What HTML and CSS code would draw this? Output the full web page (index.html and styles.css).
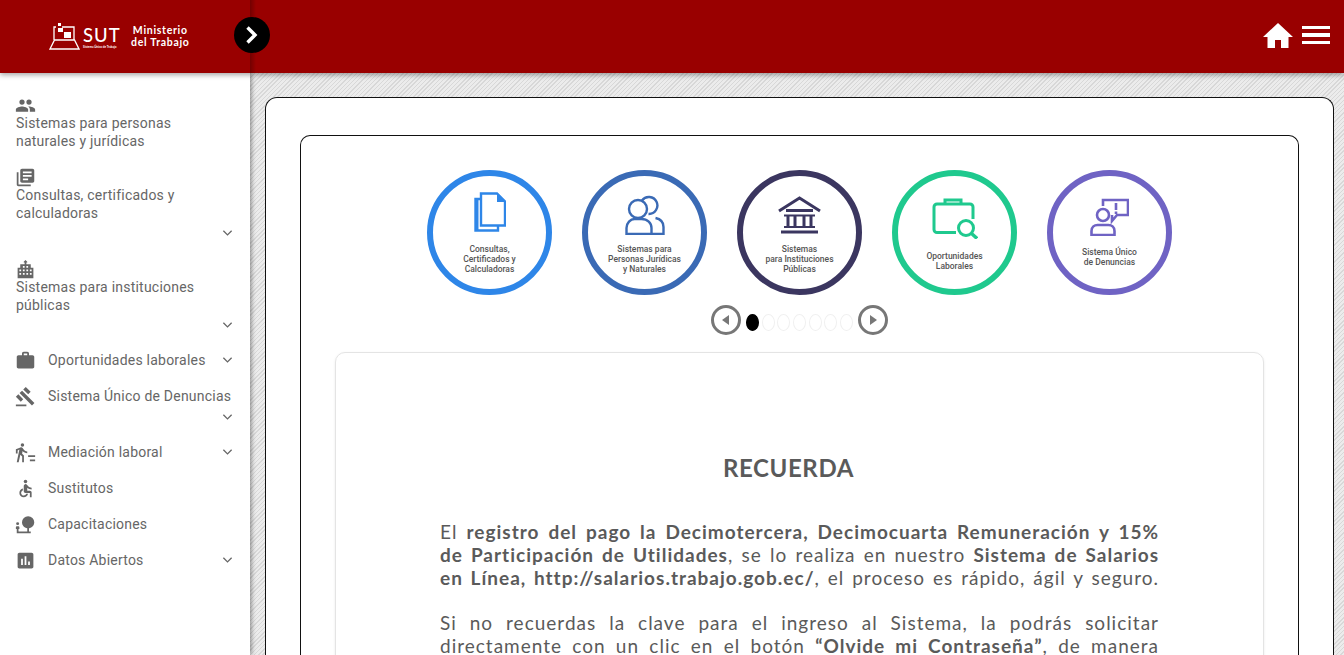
FILE: index.html
```html
<!DOCTYPE html>
<html lang="es">
<head>
  <meta charset="UTF-8" />
  <meta name="viewport" content="width=device-width, initial-scale=1" />
  <title>SUT - Ministerio del Trabajo</title>
  <link rel="stylesheet" href="styles.css">
</head>
<body>

  <!-- Header -->
  <header class="topbar">
    <div class="brand">
      <svg class="brand-mark" width="31" height="28" viewBox="0 0 31 28">
        <path d="M5 18V5h2M13 5h12v13M1 27l4.500-9h20l4.500 9z" fill="none" stroke="#fff" stroke-width="1.300"/>
        <rect x="9" y="1" width="3" height="3" fill="#fff"/>
        <rect x="9" y="6" width="5" height="4" fill="#fff"/>
        <rect x="15" y="10" width="7" height="6" fill="#fff"/>
      </svg>
      <div class="brand-sut">
        <span class="sut-name">SUT</span>
        <span class="sut-sub">Sistema Único de Trabajo</span>
      </div>
      <div class="brand-min">Ministerio<br>del Trabajo</div>
    </div>
    <button class="toggle-btn">
      <svg width="16" height="20" viewBox="0 0 16 20"><path d="M3.500 2.500l7.500 7.500-7.500 7.500" fill="none" stroke="#fff" stroke-width="3.400"/></svg>
    </button>
    <div class="top-actions">
      <svg width="30" height="27" viewBox="0 0 30 27"><path d="M15 1L0 15h4.500v11h7.500v-8h6v8h7.500V15H30z" fill="#fff"/></svg>
      <div class="burger"><span></span><span></span><span></span></div>
    </div>
  </header>

  <div class="layout">
    <!-- Sidebar -->
    <nav class="sidebar">
      <div class="stack-item">
        <svg class="icon" viewBox="0 0 24 24"><path d="M16 11a3 3 0 1 0 0-6 3 3 0 0 0 0 6zm-8 0a3 3 0 1 0 0-6 3 3 0 0 0 0 6zm0 2c-2.300 0-7 1.200-7 3.500V19h14v-2.500C15 14.200 10.300 13 8 13zm8 0c-.3 0-.6 0-1 .1 1.200.8 2 1.900 2 3.400V19h6v-2.500c0-2.300-4.700-3.500-7-3.500z"/></svg>
        <span class="stack-label">Sistemas para personas naturales y jurídicas</span>
      </div>
      <div class="stack-item stack-mid">
        <svg class="icon" viewBox="0 0 24 24"><path d="M4 6H2v14c0 1.100.9 2 2 2h14v-2H4V6zm16-4H8c-1.100 0-2 .9-2 2v12c0 1.100.9 2 2 2h12c1.100 0 2-.9 2-2V4c0-1.100-.9-2-2-2zm-1 9H9V9h10v2zm-4 4H9v-2h6v2zm4-8H9V5h10v2z"/></svg>
        <span class="stack-label">Consultas, certificados y calculadoras</span>
        <svg class="chev chev-end" viewBox="0 0 12 8"><path d="M1.500 1.500L6 6l4.500-4.500"/></svg>
      </div>
      <div class="stack-item stack-low">
        <svg class="icon" viewBox="0 0 24 24"><path d="M12 1l2 2v1h-1v2h5v4h3v12H3V10h3V6h5V4h-1V3zM7 12H5v2h2zm0 4H5v2h2zm4-8H9v2h2zm0 4H9v2h2zm0 4H9v2h2zm4-8h-2v2h2zm0 4h-2v2h2zm0 4h-2v2h2zm4-4h-2v2h2zm0 4h-2v2h2z" fill-rule="evenodd"/></svg>
        <span class="stack-label">Sistemas para instituciones públicas</span>
        <svg class="chev chev-end" viewBox="0 0 12 8"><path d="M1.500 1.500L6 6l4.500-4.500"/></svg>
      </div>

      <div class="row-item">
        <svg class="icon" viewBox="0 0 24 24"><path d="M20 6h-4V4c0-1.100-.9-2-2-2h-4c-1.100 0-2 .9-2 2v2H4c-1.100 0-2 .9-2 2v11c0 1.100.9 2 2 2h16c1.100 0 2-.9 2-2V8c0-1.100-.9-2-2-2zm-6 0h-4V4h4v2z"/></svg>
        <span class="row-label">Oportunidades laborales</span>
        <svg class="chev" viewBox="0 0 12 8"><path d="M1.500 1.500L6 6l4.500-4.500"/></svg>
      </div>
      <div class="row-item row-wrap">
        <svg class="icon" viewBox="0 0 24 24"><path d="M1 21h12v2H1zM5.200 8.100l2.900-2.800 14.100 14.100-2.800 2.900zM12.300 1l5.600 5.700-2.800 2.800-5.700-5.600zM3.800 9.500l5.600 5.700-2.800 2.800L1 12.300z"/></svg>
        <span class="row-label">Sistema Único de Denuncias</span>
        <svg class="chev chev-end" viewBox="0 0 12 8"><path d="M1.500 1.500L6 6l4.500-4.500"/></svg>
      </div>
      <div class="row-item">
        <svg class="icon" viewBox="0 0 24 24"><path d="M8.500 5.500a2 2 0 1 0 0-4 2 2 0 0 0 0 4zM5 8.500L2 23h2.200l1.900-8.500 2.100 2V23h2v-7.700l-2.100-2 .6-3c1.300 1.500 3.200 2.500 5.300 2.500v-2c-1.900 0-3.500-1-4.300-2.400l-1-1.600C8.300 6.300 7.700 6 7 6c-.3 0-.5 0-.8.200L1 8.300V13h2V9.600zM15 15h8v2h-8zm2 5h6v2h-6z"/></svg>
        <span class="row-label">Mediación laboral</span>
        <svg class="chev" viewBox="0 0 12 8"><path d="M1.500 1.500L6 6l4.500-4.500"/></svg>
      </div>
      <div class="row-item">
        <svg class="icon" viewBox="0 0 24 24"><circle cx="12" cy="4" r="2"/><path d="M19 13v-2c-1.500 0-3.100-.8-4.100-1.900l-1.300-1.400c-.2-.2-.4-.4-.7-.5-.3-.2-.7-.3-1.100-.2-1 .1-1.800 1-1.800 2.100V15c0 1.100.9 2 2 2h5v5h2v-5.500c0-1.100-.9-2-2-2h-3v-3.400c1.300 1 3.200 1.900 5 1.900zm-6.200 5c-.4 1.200-1.500 2-2.800 2-1.700 0-3-1.300-3-3 0-1.300.8-2.400 2-2.800v-2.100C6.700 12.600 5 14.600 5 17c0 2.800 2.200 5 5 5 2.400 0 4.400-1.700 4.900-4z"/></svg>
        <span class="row-label">Sustitutos</span>
      </div>
      <div class="row-item">
        <svg class="icon" viewBox="0 0 24 24"><path d="M22 9.500a7 7 0 0 0-14 0c0 3.500 2.500 6.300 6 6.900V20H4v-3h1v-2c0-.6-.4-1-1-1H2c-.5 0-1 .4-1 1v2h1v5h16v-2h-2v-3.600c3.400-.5 6-3.400 6-6.900z"/><circle cx="3" cy="11" r="1.700"/></svg>
        <span class="row-label">Capacitaciones</span>
      </div>
      <div class="row-item">
        <svg class="icon" viewBox="0 0 24 24"><path d="M19 3H5c-1.100 0-2 .9-2 2v14c0 1.100.9 2 2 2h14c1.100 0 2-.9 2-2V5c0-1.100-.9-2-2-2zM9 17H7v-7h2v7zm4 0h-2V7h2v10zm4 0h-2v-4h2v4z"/></svg>
        <span class="row-label">Datos Abiertos</span>
        <svg class="chev" viewBox="0 0 12 8"><path d="M1.500 1.500L6 6l4.500-4.500"/></svg>
      </div>
    </nav>

    <!-- Main content -->
    <main class="content">
      <section class="outer-card">
        <div class="inner-card">

          <div class="carousel">
            <div class="ring ring-blue">
              <svg class="ring-icon" width="32" height="40" viewBox="0 0 32 40" fill="none" stroke="#2e86e8" stroke-width="2.400">
                <path d="M7 1.500h16l8 8v24H7zM6 7H1.500v31.500H24V34"/>
                <path d="M23 2l8 8h-8z" fill="#2e86e8" stroke="none"/>
                <path d="M3 7v31.500" stroke-width="3"/>
              </svg>
              <p class="ring-text">Consultas,<br>Certificados y<br>Calculadoras</p>
            </div>
            <div class="ring ring-indigo">
              <svg class="ring-icon" width="40" height="40" viewBox="0 0 40 40" fill="none" stroke="#3a6ab5" stroke-width="2.400">
                <circle cx="13" cy="14" r="9"/>
                <path d="M17 5.500a8.500 8.500 0 1 1 6.500 13.500M1.500 39v-6c0-5 4-9 8-9h7c6 0 10 4 10 9v6zM26.500 39h12v-7c0-5-3-8-8-9"/>
              </svg>
              <p class="ring-text">Sistemas para<br>Personas Jurídicas<br>y Naturales</p>
            </div>
            <div class="ring ring-navy">
              <svg class="ring-icon" width="44" height="38" viewBox="0 0 44 38" fill="none" stroke="#3b3660" stroke-width="3">
                <path d="M1 15L21.500 2 42 15M8 14.500h27" />
                <path d="M6 19.500h31M6 31h31" stroke-width="2"/>
                <path d="M10 20v11M17 20v11M26 20v11M33 20v11M3 36h37"/>
              </svg>
              <p class="ring-text">Sistemas<br>para Instituciones<br>Públicas</p>
            </div>
            <div class="ring ring-green">
              <svg class="ring-icon" width="46" height="41" viewBox="0 0 46 41" fill="none" stroke="#1fc98e" stroke-width="3">
                <path d="M24 34.500H5a3 3 0 0 1-3-3V9a3 3 0 0 1 3-3h33a3 3 0 0 1 3 3v12M13 6V2h16v4"/>
                <circle cx="34" cy="30" r="7.500"/>
                <path d="M39.500 35.500L45 40.500" stroke-width="3.400"/>
              </svg>
              <p class="ring-text">Oportunidades<br>Laborales</p>
            </div>
            <div class="ring ring-purple">
              <svg class="ring-icon" width="39" height="38" viewBox="0 0 39 38" fill="none" stroke="#6f63c4" stroke-width="2.600">
                <circle cx="13" cy="17" r="6"/>
                <path d="M1.500 37v-4c0-4 3-6 6-6h11c3 0 6 2 6 6v4zM13 8V2h25v15H27l-5 6v-6"/>
                <path d="M26 5v7M26 13.500v2.500"/>
              </svg>
              <p class="ring-text">Sistema Único<br>de Denuncias</p>
            </div>
          </div>

          <div class="pager">
            <span class="pager-arrow"><span class="tri-left"></span></span>
            <div class="dots">
              <span class="dot dot-on"></span>
              <span class="dot"></span>
              <span class="dot"></span>
              <span class="dot"></span>
              <span class="dot"></span>
              <span class="dot"></span>
              <span class="dot"></span>
            </div>
            <span class="pager-arrow"><span class="tri-right"></span></span>
          </div>

          <article class="notice">
            <h2>RECUERDA</h2>
            <p>El <b>registro del pago la Decimotercera, Decimocuarta Remuneración y 15%</b><br>
            <b>de Participación de Utilidades</b>, se lo realiza en nuestro <b>Sistema de Salarios</b><br>
            <b>en Línea, http://salarios.trabajo.gob.ec/</b>, el proceso es rápido, ágil y seguro.</p>
            <p>Si no recuerdas la clave para el ingreso al Sistema, la podrás solicitar<br>
            directamente con un clic en el botón <b>“Olvide mi Contraseña”</b>, de manera</p>
          </article>

        </div>
      </section>
    </main>
  </div>

</body>
</html>
```

FILE: styles.css
```css
* {
  box-sizing: border-box;
}
html, body {
  height: 100%;
}
body {
  margin: 0;
  overflow: hidden;
  font-family: Roboto, sans-serif;
  color: #616161;
  display: flex;
  flex-direction: column;
}

/* header */
.topbar {
  height: 73px;
  flex: none;
  background: #990000;
  display: flex;
  align-items: center;
  position: relative;
  z-index: 3;
  box-shadow: 0 2px 5px rgba(0,0,0,0.35);
}
.topbar::after {
  content: "";
  position: absolute;
  left: 250px;
  top: 0;
  bottom: 0;
  width: 6px;
  background: linear-gradient(90deg, rgba(0,0,0,0.25), rgba(0,0,0,0));
}
.brand {
  width: 234px;
  padding: 0 0 1px 49px;
  display: flex;
  align-items: center;
  color: #fff;
}
.brand-mark {
  flex: none;
}
.brand-sut {
  margin: 3px 0 0 3px;
  width: 35px;
  display: flex;
  flex-direction: column;
}
.sut-name {
  font: 500 18.5px/19px Lato, sans-serif;
  letter-spacing: 1px;
}
.sut-sub {
  font: 700 3px/5px Lato, sans-serif;
  white-space: nowrap;
}
.brand-min {
  margin: -1px 0 0 13px;
  font: 700 10.5px/12px Lato, sans-serif;
  letter-spacing: 0.7px;
  text-align: center;
  white-space: nowrap;
}
.toggle-btn {
  width: 36px;
  height: 36px;
  margin-top: -3px;
  padding: 0;
  border: none;
  border-radius: 50%;
  background: #000;
  position: relative;
  z-index: 1;
  display: flex;
  align-items: center;
  justify-content: center;
}
.top-actions {
  margin: -3px 0 0 auto;
  padding-right: 14px;
  display: flex;
  align-items: center;
  gap: 9px;
}
.burger {
  width: 28px;
  display: flex;
  flex-direction: column;
  gap: 4px;
}
.burger span {
  height: 3.5px;
  background: #fff;
}

/* layout */
.layout {
  flex: 1;
  display: flex;
  min-height: 0;
}
.sidebar {
  width: 250px;
  flex: none;
  background: #fff;
  padding-top: 23px;
  font-size: 14px;
  line-height: 18px;
  letter-spacing: 0.22px;
  color: #666;
  position: relative;
  z-index: 2;
  box-shadow: 2px 0 4px rgba(0,0,0,0.35);
}
.icon {
  width: 21px;
  height: 21px;
  margin: -1.5px;
  fill: #666;
  flex: none;
  display: block;
}
.chev {
  width: 11px;
  height: 8px;
  flex: none;
  fill: none;
  stroke: #666;
  stroke-width: 1.4;
}
.stack-item {
  padding: 0 16px;
  margin-bottom: 18px;
}
.stack-mid {
  margin-bottom: 23px;
}
.stack-low {
  margin-bottom: 13px;
}
.stack-item .chev-end {
  display: block;
  margin: 7px 1px 0 auto;
}
.stack-label {
  display: block;
}
.row-item {
  min-height: 36px;
  padding: 0 17px 0 16px;
  display: flex;
  align-items: center;
}
.row-label {
  margin-left: 14px;
  flex: 1;
  white-space: nowrap;
}
.row-wrap {
  flex-wrap: wrap;
  align-items: flex-start;
  align-content: flex-start;
  padding-top: 9px;
  height: 56px;
}
.row-wrap .row-label {
  flex: none;
}
.row-wrap .chev-end {
  margin: 8px 0 0 auto;
}

/* main */
.content {
  flex: 1;
  min-width: 0;
  padding: 24px 10px 0 15px;
  overflow: hidden;
  background: repeating-linear-gradient(135deg, #d8d8d8 0 1px, #ececec 1px 3px);
}
.outer-card {
  height: 100%;
  padding: 37px 34px 0;
  background: #fff;
  border: 1px solid #111;
  border-bottom: none;
  border-radius: 12px 12px 0 0;
}
.inner-card {
  height: 100%;
  padding: 34px 34px 0;
  background: #fff;
  border: 1px solid #111;
  border-bottom: none;
  border-radius: 10px 10px 0 0;
}

/* carousel */
.carousel {
  display: flex;
  justify-content: center;
  gap: 30px;
}
.ring {
  width: 125px;
  height: 125px;
  border-radius: 50%;
  border: 6px solid;
  display: flex;
  flex-direction: column;
  align-items: center;
  padding-top: 14px;
}
.ring-blue { border-color: #2e86e8; }
.ring-indigo { border-color: #3a6ab5; }
.ring-navy { border-color: #3b3660; }
.ring-green { border-color: #1fc98e; }
.ring-purple { border-color: #6f63c4; }
.ring-icon {
  flex: none;
  display: block;
}
.ring-blue .ring-icon { margin-top: 2px; }
.ring-indigo .ring-icon { margin-top: 5px; }
.ring-navy .ring-icon { margin-top: 6px; }
.ring-green .ring-icon { margin-top: 8px; }
.ring-purple .ring-icon { margin-top: 8px; }
.ring-text {
  margin: 12px 0 0;
  font-size: 8.5px;
  font-weight: 500;
  line-height: 10px;
  text-align: center;
  color: #555;
  white-space: nowrap;
}
.ring-indigo .ring-text { margin-top: 9px; }
.ring-navy .ring-text { margin-top: 10px; }
.ring-purple .ring-text { margin-top: 11px; }

/* pager */
.pager {
  margin-top: 10px;
  display: flex;
  justify-content: center;
  align-items: center;
  gap: 5px;
}
.pager-arrow {
  width: 30px;
  height: 30px;
  border: 3px solid #777;
  border-radius: 50%;
  display: flex;
  align-items: center;
  justify-content: center;
}
.tri-left {
  border: 5.5px solid transparent;
  border-left: none;
  border-right: 7px solid #777;
}
.tri-right {
  border: 5.5px solid transparent;
  border-right: none;
  border-left: 7px solid #777;
}
.dots {
  display: flex;
  gap: 2.7px;
  margin-top: 5px;
}
.dot {
  width: 13px;
  height: 17px;
  border-radius: 50%;
  border: 1px solid #f0f0f0;
  background: #fff;
}
.dot-on {
  background: #000;
  border-color: #000;
}

/* notice */
.notice {
  height: 400px;
  margin-top: 17px;
  padding: 99px 104px 0;
  border: 1px solid #e4e4e4;
  border-radius: 10px;
  box-shadow: 0 1px 3px rgba(0,0,0,0.08);
  font-family: Lato, sans-serif;
  font-size: 19px;
  line-height: 23px;
  letter-spacing: 1px;
  color: #5a5a5a;
}
.notice h2 {
  margin: 0 22px 38px 0;
  padding-top: 1px;
  font-size: 24px;
  line-height: 30px;
  letter-spacing: 0.6px;
  font-weight: 700;
  text-align: center;
}
.notice p {
  margin: 0 0 22px;
  text-align: justify;
  text-align-last: justify;
  white-space: nowrap;
}
.notice p:first-of-type {
  margin-top: -1px;
}
.notice b {
  font-weight: 700;
}
```
